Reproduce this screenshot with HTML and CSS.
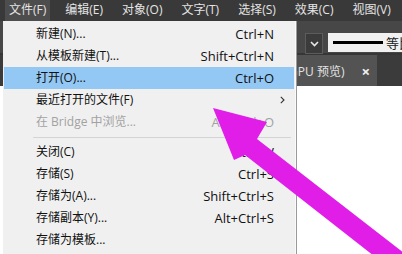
FILE: index.html
```html
<!doctype html>
<html lang="zh-CN">
  <head>
    <meta charset="UTF-8" />
    <title>文件菜单</title>
    <link rel="stylesheet" href="styles.css">
  </head>

  <body>
    <div id="app">
      <div class="menubar">
        <span class="top_item active">文件(F)</span>
        <span class="top_item">编辑(E)</span>
        <span class="top_item">对象(O)</span>
        <span class="top_item">文字(T)</span>
        <span class="top_item">选择(S)</span>
        <span class="top_item">效果(C)</span>
        <span class="top_item">视图(V)</span>
      </div>

      <div class="toolbar">
        <div class="dropdown">
          <svg width="9" height="6" viewBox="0 0 9 6">
            <path d="M1 1 L4.5 4.5 L8 1" fill="none" stroke="#e8e8e8" stroke-width="1.6" />
          </svg>
        </div>
        <div class="stroke_box">
          <span class="stroke_line"></span>
          <span class="stroke_label">等比</span>
        </div>
      </div>

      <div class="tabs">
        <div class="tab">
          <span class="tab_title">未标题-1 @ 66.67% (CMYK/GPU 预览)</span>
          <span class="tab_close">×</span>
        </div>
      </div>

      <div class="canvas"></div>

      <!-- 文件 dropdown -->
      <div class="menu">
        <div class="row"><span>新建(N)...</span><span class="key">Ctrl+N</span></div>
        <div class="row"><span>从模板新建(T)...</span><span class="key">Shift+Ctrl+N</span></div>
        <div class="row hover"><span>打开(O)...</span><span class="key">Ctrl+O</span></div>
        <div class="row">
          <span>最近打开的文件(F)</span><span class="key"></span>
          <span class="sub">
            <svg width="5" height="8" viewBox="0 0 5 8">
              <path d="M0.8 0.8 L4 4 L0.8 7.2" fill="none" stroke="#333" stroke-width="1.1" />
            </svg>
          </span>
        </div>
        <div class="row disabled"><span>在 Bridge 中浏览...</span><span class="key">Alt+Ctrl+O</span></div>
        <div class="sep"></div>
        <div class="row"><span>关闭(C)</span><span class="key">Ctrl+W</span></div>
        <div class="row"><span>存储(S)</span><span class="key">Ctrl+S</span></div>
        <div class="row"><span>存储为(A)...</span><span class="key">Shift+Ctrl+S</span></div>
        <div class="row"><span>存储副本(Y)...</span><span class="key">Alt+Ctrl+S</span></div>
        <div class="row"><span>存储为模板...</span><span class="key"></span></div>
      </div>

      <svg class="arrow" width="402" height="254" viewBox="0 0 402 254">
        <polygon points="213,108 267,122 257,139 440,281 420,292 245,155 234,160" fill="#e01ee8" />
      </svg>
    </div>
  </body>
</html>
```

FILE: styles.css
```css
body {
  margin: 0;
  width: 402px;
  height: 254px;
  overflow: hidden;
  font-family: "Open Sans", "Noto Sans CJK SC", sans-serif;
  font-size: 12px;
}

#app {
  position: relative;
  display: flex;
  flex-direction: column;
  height: 254px;
  background-color: #3a3a3a;
}

.menubar {
  display: flex;
  gap: 11px;
  height: 21px;
  padding-left: 5px;
  background-color: #393939;
  color: #e4e4e4;
}

.top_item {
  padding: 0 4px;
  line-height: 20px;
  white-space: nowrap;
}

.active {
  background-color: #4d4d4d;
}

.toolbar {
  display: flex;
  gap: 5px;
  height: 34px;
  padding-left: 305px;
  padding-top: 12px;
  box-sizing: border-box;
  background-color: #474747;
  border-bottom: 2px solid #363636;
}

.dropdown {
  display: flex;
  align-items: center;
  justify-content: center;
  width: 16px;
  height: 19px;
  background-color: #3b3b3b;
  border: 1px solid #5c5c5c;
}

.stroke_box {
  display: flex;
  align-items: center;
  flex: 1;
  height: 19px;
  padding-left: 5px;
  background-color: #f1f1f1;
  white-space: nowrap;
  overflow: hidden;
}

.stroke_line {
  flex: none;
  width: 50px;
  height: 3px;
  background-color: #000;
}

.stroke_label {
  margin-left: 3px;
  font-size: 13px;
  color: #222;
}

.tabs {
  display: flex;
  height: 31px;
  padding-left: 150px;
  background-color: #3b3b3b;
}

.tab {
  display: flex;
  align-items: center;
  justify-content: flex-end;
  width: 227px;
  padding-right: 7px;
  box-sizing: border-box;
  background-color: #535353;
  color: #e2e2e2;
  white-space: nowrap;
  overflow: hidden;
}

.tab_close {
  margin-left: 17px;
  font-size: 15px;
  font-weight: bold;
  color: #f0f0f0;
}

.canvas {
  flex: 1;
  background-color: #fff;
}

.menu {
  position: absolute;
  top: 21px;
  left: 3px;
  width: 293px;
  bottom: -10px;
  padding: 2px 1px;
  box-sizing: border-box;
  background-color: #f0f0f0;
  border-right: 1px solid #fafafa;
  box-shadow: 1px 0 0 #9a9a9a;
  color: #111;
}

.row {
  display: grid;
  grid-template-columns: 1fr auto 20px;
  height: 22px;
  line-height: 22px;
  padding-left: 32px;
  white-space: nowrap;
}

.key {
  font-size: 13px;
}

.sub {
  display: flex;
  align-items: center;
  padding-left: 6px;
}

.hover {
  background-color: #94c8f4;
}

.disabled {
  color: #a2a2a2;
}

.sep {
  height: 1px;
  margin: 4px 3px 3px 29px;
  background-color: #d4d4d4;
}

.arrow {
  position: absolute;
  top: 0;
  left: 0;
  pointer-events: none;
}
```
